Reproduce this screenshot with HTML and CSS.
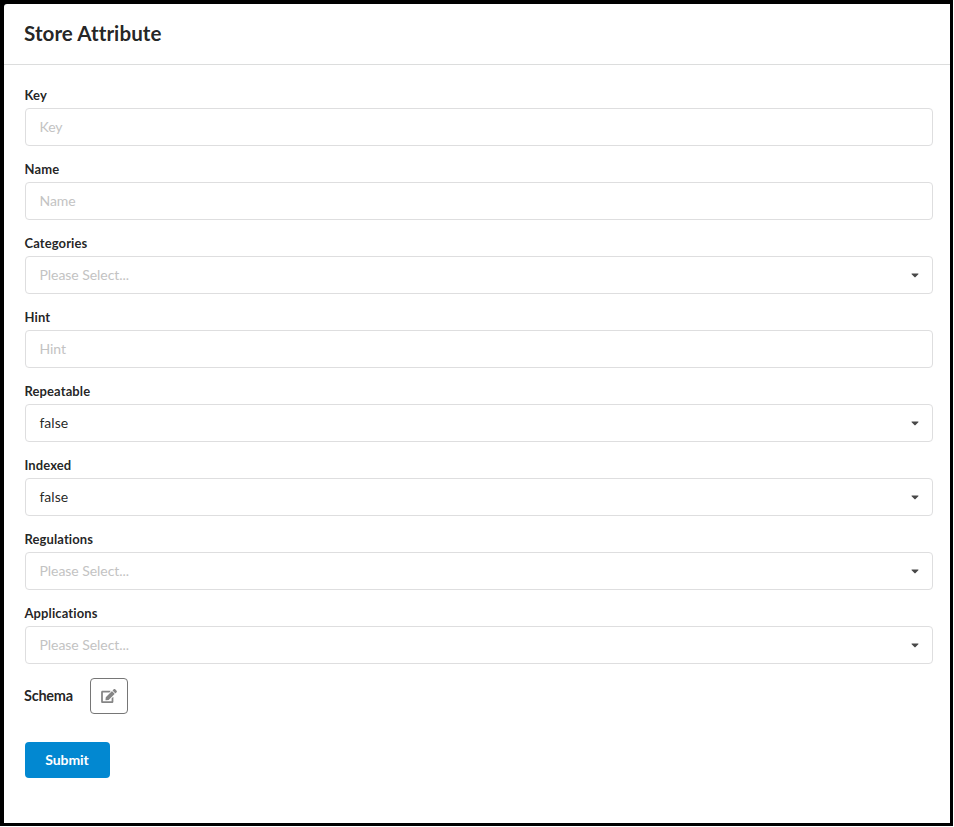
FILE: index.html
```html
<!DOCTYPE html>
<html lang="en">
<head>
<meta charset="utf-8">
<title>Store Attribute</title>
<link rel="stylesheet" href="styles.css">
</head>
<body>
<svg class="defs" aria-hidden="true">
  <symbol id="caret" viewBox="0 0 320 512"><path d="M31.3 192h257.3c17.8 0 26.7 21.5 14.1 34.1L174.1 354.8c-7.8 7.8-20.5 7.8-28.3 0L17.2 226.1C4.6 213.5 13.5 192 31.3 192z"/></symbol>
</svg>
<div class="frame">
  <div class="modal">
    <h1 class="header">Store Attribute</h1>
    <form class="form">
      <div class="field"><label>Key</label><div class="control placeholder">Key</div></div>
      <div class="field"><label>Name</label><div class="control placeholder">Name</div></div>
      <div class="field"><label>Categories</label><div class="control placeholder">Please Select...<svg class="caret"><use href="#caret"/></svg></div></div>
      <div class="field"><label>Hint</label><div class="control placeholder">Hint</div></div>
      <div class="field"><label>Repeatable</label><div class="control">false<svg class="caret"><use href="#caret"/></svg></div></div>
      <div class="field"><label>Indexed</label><div class="control">false<svg class="caret"><use href="#caret"/></svg></div></div>
      <div class="field"><label>Regulations</label><div class="control placeholder">Please Select...<svg class="caret"><use href="#caret"/></svg></div></div>
      <div class="field"><label>Applications</label><div class="control placeholder">Please Select...<svg class="caret"><use href="#caret"/></svg></div></div>
      <div class="schema">
        <span>Schema</span>
        <button type="button" class="edit" aria-label="Edit schema">
          <svg viewBox="0 0 576 512"><path d="M402.6 83.2l90.2 90.2c3.8 3.8 3.8 10 0 13.8L274.4 405.6l-92.8 10.3c-12.4 1.4-22.9-9.1-21.5-21.5l10.3-92.8L388.8 83.2c3.8-3.8 10-3.8 13.8 0zm162-22.9l-48.8-48.8c-15.2-15.2-39.9-15.2-55.2 0l-35.4 35.4c-3.8 3.8-3.8 10 0 13.8l90.2 90.2c3.8 3.8 10 3.8 13.8 0l35.4-35.4c15.2-15.3 15.2-40 0-55.2zM384 346.2V448H64V128h229.8c3.2 0 6.2-1.3 8.5-3.5l40-40c7.6-7.6 2-20.5-8.5-20.5H48C21.5 64 0 85.5 0 112v352c0 26.5 21.5 48 48 48h352c26.5 0 48-21.5 48-48V306.2c0-10.7-12.9-16-20.5-8.5l-40 40c-2.2 2.3-3.5 5.3-3.5 8.5z"/></svg>
        </button>
      </div>
      <button type="button" class="submit">Submit</button>
    </form>
  </div>
</div>
</body>
</html>
```
FILE: styles.css
```css
* { box-sizing: border-box; }
body {
  margin: 0;
  background: #fff;
  font-family: Lato, "Liberation Sans", sans-serif;
  font-size: 14px;
  line-height: 18px;
  font-variant-ligatures: none;
  color: rgba(0, 0, 0, .87);
  overflow: hidden;
}
.defs { display: none; }
.frame {
  width: 953px;
  height: 826px;
  padding: 4px 3px 3px 4px;
  background: #000;
}
.modal {
  height: 100%;
  background: #fff;
  border-top-left-radius: 3px;
}
.header {
  margin: 0;
  height: 61px;
  padding: 16px 20px 0;
  border-bottom: 1px solid #dcdddd;
  font-size: 20.6px;
  letter-spacing: .05px;
  line-height: 26px;
  font-weight: 700;
}
.form { padding: 21px 17px 0 21px; }
.field label {
  display: block;
  height: 18px;
  margin-bottom: 4px;
  margin-left: -.5px;
  font-size: 13px;
  letter-spacing: .1px;
  font-weight: 700;
}
.control {
  display: flex;
  align-items: center;
  justify-content: space-between;
  height: 38px;
  margin-bottom: 14px;
  padding: 0 13.5px;
  border: 1px solid #dededf;
  border-radius: 4px;
}
.placeholder {
  color: #c3c3c3;
  letter-spacing: -.05px;
}
.caret {
  width: 8px;
  height: 12px;
  fill: #484848;
}
.schema {
  display: flex;
  align-items: center;
  height: 36px;
  font-size: 14.5px;
  letter-spacing: -.25px;
  font-weight: 700;
}
.schema span {
  width: 66px;
  margin-left: -1px;
  padding-bottom: 1px;
}
.edit {
  display: flex;
  align-items: center;
  justify-content: center;
  width: 38px;
  height: 36px;
  padding: 0;
  background: #fff;
  border: 1px solid #767676;
  border-radius: 4px;
}
.edit svg {
  width: 16px;
  height: 14px;
  fill: #858585;
}
.submit {
  display: block;
  width: 85px;
  height: 36px;
  margin-top: 28px;
  padding: 0 1px 0 0;
  border: 0;
  border-radius: 4px;
  background: #0288d1;
  color: #fff;
  font: 700 14px/18px Lato, "Liberation Sans", sans-serif;
  letter-spacing: -.1px;
}
```
